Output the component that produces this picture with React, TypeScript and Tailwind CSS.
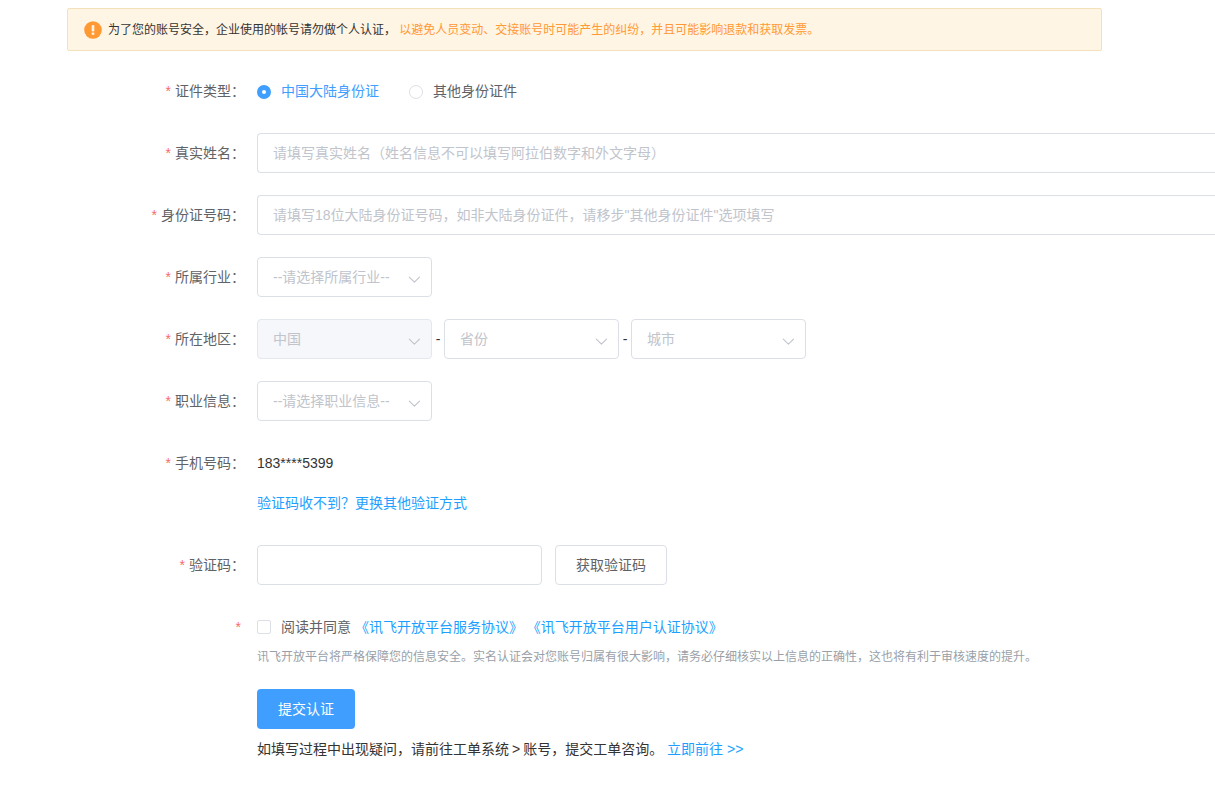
import type { ReactNode } from 'react';

function Row({ label, htmlFor, children }: { label: string; htmlFor?: string; children: ReactNode }) {
  const text = (
    <>
      <span className="mr-1 text-[#f56c6c]">*</span>
      {label}
    </>
  );
  return (
    <div className="mb-[22px] flex">
      {htmlFor ? (
        <label htmlFor={htmlFor} className="w-[190px] shrink-0 pr-3 text-right leading-10 text-[#606266]">
          {text}
        </label>
      ) : (
        <div className="w-[190px] shrink-0 pr-3 text-right leading-10 text-[#606266]">{text}</div>
      )}
      <div className="min-w-0 flex-1">{children}</div>
    </div>
  );
}

function Select({ id, label, placeholder, disabled }: { id: string; label?: string; placeholder: string; disabled?: boolean }) {
  return (
    <div className="relative w-[175px]">
      <select
        id={id}
        aria-label={label}
        disabled={disabled}
        defaultValue=""
        className="block h-10 w-full appearance-none rounded border border-[#dcdfe6] bg-white pr-8 pl-[15px] text-[#c0c4cc] opacity-100 outline-none focus:border-[#409eff] disabled:border-[#e4e7ed] disabled:bg-[#f5f7fa]"
      >
        <option value="">{placeholder}</option>
      </select>
      <svg
        viewBox="0 0 12 8"
        className="pointer-events-none absolute top-[19px] right-3 h-2 w-3"
        fill="none"
        stroke="#c0c4cc"
        strokeWidth="1.1"
        strokeLinecap="round"
        strokeLinejoin="round"
      >
        <path d="M1.3 1.2 6.4 6.2 11.5 1.2" />
      </svg>
    </div>
  );
}

function Radio({ id, label, checked }: { id: string; label: string; checked?: boolean }) {
  return (
    <label htmlFor={id} className="flex items-center gap-2.5 text-[#606266] has-checked:text-[#409eff]">
      <input
        id={id}
        type="radio"
        name="idType"
        defaultChecked={checked}
        className="mt-0.5 size-3.5 appearance-none rounded-full border border-[#dcdfe6] bg-white checked:border-[5px] checked:border-[#409eff]"
      />
      {label}
    </label>
  );
}

export default function App() {
  return (
    <main className="overflow-x-hidden bg-white pt-2 pb-4 pl-[67px] font-['Liberation_Sans','Noto_Sans_CJK_SC',sans-serif] text-sm text-[#333]">
      <div className="mr-[113px] mb-5 flex min-h-[43px] items-center gap-1.5 rounded-xs border border-[#f5e1b9] bg-[#fff5e4] px-4 text-xs">
        <svg viewBox="0 0 18 18" className="size-[18px] shrink-0" aria-hidden="true">
          <circle cx="9" cy="9" r="8.8" fill="#ff9933" />
          <path d="M7.7 4.2h2.6v6.2H7.7z" fill="#fff5e4" />
          <path d="M7.7 11.6h2.6v2.2H7.7z" fill="#fff5e4" />
        </svg>
        <p>
          为了您的账号安全，企业使用的帐号请勿做个人认证，{' '}
          <span className="text-[#ff9933]">以避免人员变动、交接账号时可能产生的纠纷，并且可能影响退款和获取发票。</span>
        </p>
      </div>

      <form onSubmit={(e) => e.preventDefault()}>
        <Row label="证件类型：">
          <div className="flex h-10 items-center gap-[30px]" role="radiogroup" aria-label="证件类型">
            <Radio id="mainland" label="中国大陆身份证" checked />
            <Radio id="other" label="其他身份证件" />
          </div>
        </Row>
        <Row label="真实姓名：" htmlFor="name">
          <input
            id="name"
            type="text"
            placeholder="请填写真实姓名（姓名信息不可以填写阿拉伯数字和外文字母）"
            className="block h-10 w-full rounded-l border border-r-0 border-[#dcdfe6] px-[15px] text-[#606266] outline-none placeholder:text-[#c0c4cc] focus:border-[#409eff]"
          />
        </Row>
        <Row label="身份证号码：" htmlFor="idNumber">
          <input
            id="idNumber"
            type="text"
            placeholder="请填写18位大陆身份证号码，如非大陆身份证件，请移步&quot;其他身份证件&quot;选项填写"
            className="block h-10 w-full rounded-l border border-r-0 border-[#dcdfe6] px-[15px] text-[#606266] outline-none placeholder:text-[#c0c4cc] focus:border-[#409eff]"
          />
        </Row>
        <Row label="所属行业：" htmlFor="industry">
          <Select id="industry" placeholder="--请选择所属行业--" />
        </Row>
        <Row label="所在地区：" htmlFor="country">
          <div className="flex items-center">
            <Select id="country" placeholder="中国" disabled />
            <span className="w-3 text-center">-</span>
            <Select id="province" label="省份" placeholder="省份" />
            <span className="w-3 text-center">-</span>
            <Select id="city" label="城市" placeholder="城市" />
          </div>
        </Row>
        <Row label="职业信息：" htmlFor="job">
          <Select id="job" placeholder="--请选择职业信息--" />
        </Row>
        <Row label="手机号码：">
          <p className="leading-10">183****5399</p>
          <a href="#verify" className="block w-fit leading-10 text-[#1e9fff]">
            验证码收不到？更换其他验证方式
          </a>
        </Row>
        <Row label="验证码：" htmlFor="code">
          <div className="flex gap-[13px]">
            <input
              id="code"
              type="text"
              className="h-10 w-[285px] rounded border border-[#dcdfe6] px-[15px] text-[#606266] outline-none focus:border-[#409eff]"
            />
            <button type="button" className="h-10 rounded border border-[#dcdfe6] bg-white px-5 text-[#606266]">
              获取验证码
            </button>
          </div>
        </Row>
        <Row label="">
          <div className="flex h-10 items-center gap-2.5">
            <input
              id="agree"
              type="checkbox"
              className="size-3.5 appearance-none rounded-xs border border-[#dcdfe6] bg-white checked:border-[#409eff] checked:bg-[#409eff]"
            />
            <p>
              <label htmlFor="agree" className="text-[#606266]">
                阅读并同意
              </label>{' '}
              <a href="#service" className="text-[#1e9fff]">
                《讯飞开放平台服务协议》
              </a>{' '}
              <a href="#certification" className="text-[#1e9fff]">
                《讯飞开放平台用户认证协议》
              </a>
            </p>
          </div>
          <p className="text-xs leading-5 text-[#999fa8]">
            讯飞开放平台将严格保障您的信息安全。实名认证会对您账号归属有很大影响，请务必仔细核实以上信息的正确性，这也将有利于审核速度的提升。
          </p>
        </Row>
        <div className="pl-[190px]">
          <button type="submit" className="block h-10 rounded bg-[#409eff] px-[21px] text-white">
            提交认证
          </button>
          <p className="leading-10">
            如填写过程中出现疑问，请前往工单系统<span className="mx-[3px]">&gt;</span>账号，提交工单咨询。{' '}
            <a href="#tickets" className="text-[#1e9fff]">
              立即前往 &gt;&gt;
            </a>
          </p>
        </div>
      </form>
    </main>
  );
}
